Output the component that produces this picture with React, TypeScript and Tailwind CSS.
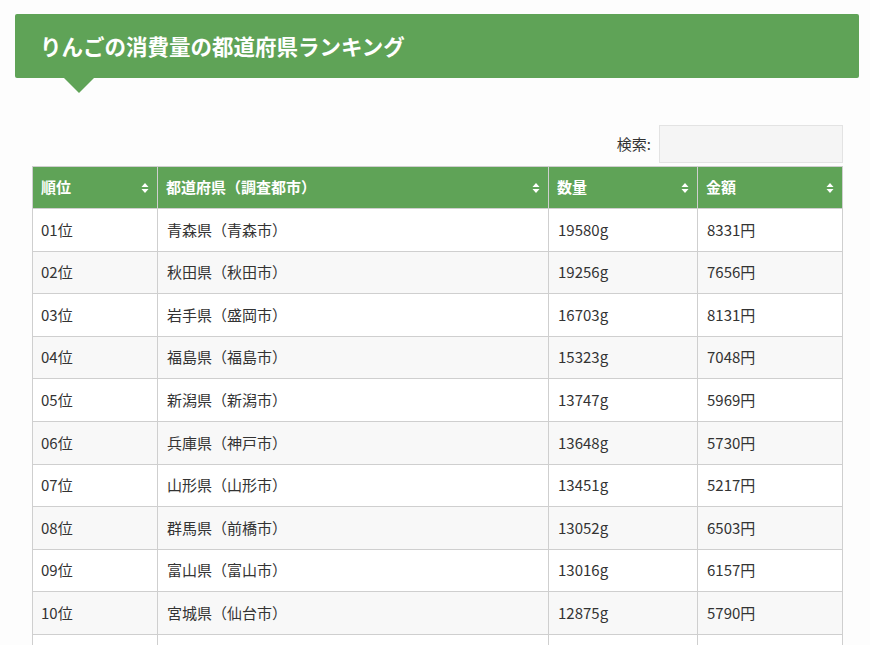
import React from "react";

const rows = [
  ["01位", "青森県（青森市）", "19580g", "8331円"],
  ["02位", "秋田県（秋田市）", "19256g", "7656円"],
  ["03位", "岩手県（盛岡市）", "16703g", "8131円"],
  ["04位", "福島県（福島市）", "15323g", "7048円"],
  ["05位", "新潟県（新潟市）", "13747g", "5969円"],
  ["06位", "兵庫県（神戸市）", "13648g", "5730円"],
  ["07位", "山形県（山形市）", "13451g", "5217円"],
  ["08位", "群馬県（前橋市）", "13052g", "6503円"],
  ["09位", "富山県（富山市）", "13016g", "6157円"],
  ["10位", "宮城県（仙台市）", "12875g", "5790円"],
  ["", "", "", ""],
];

const heads = ["順位", "都道府県（調査都市）", "数量", "金額"];
const widths = ["w-[125px]", "w-[391px]", "w-[149px]", "w-[145px]"];

const SortIcon = () => (
  <svg width="8" height="12" viewBox="0 0 8 12" className="shrink-0">
    <path d="M4 1 L7.5 5 H0.5 Z M4 11 L7.5 7 H0.5 Z" fill="white" />
  </svg>
);

export default function App() {
  return (
    <div
      className="w-[870px] h-[645px] overflow-hidden bg-[#fdfdfd] pt-[14px] text-[#333]"
      style={{ fontFamily: "'Noto Sans CJK JP', 'Noto Sans', sans-serif" }}
    >
      <div className="relative ml-[15px] w-[844px] h-[64px] bg-[#5fa357] rounded-[2px] flex items-center pl-[25px]">
        <h1 className="text-white text-[21.5px] font-bold">りんごの消費量の都道府県ランキング</h1>
        <div className="absolute left-[49px] top-[64px] w-0 h-0 border-l-[15px] border-r-[15px] border-t-[15px] border-l-transparent border-r-transparent border-t-[#5fa357]" />
      </div>
      <div className="ml-[32px] w-[811px] mt-[47px] flex justify-end items-center gap-[8px] text-[15px]">
        <span>検索:</span>
        <div className="w-[184px] h-[38px] bg-[#f5f5f5] border border-[#e3e3e3]" />
      </div>
      <table className="ml-[32px] mt-[3px] border-collapse text-[15px] table-fixed w-[811px]">
        <thead>
          <tr className="bg-[#5fa357] text-white h-[42px]">
            {heads.map((h, i) => (
              <th key={i} className={`${widths[i]} border border-[#cfcfcf] px-[8px] font-bold text-left`}>
                <div className="flex items-center justify-between">
                  <span>{h}</span>
                  <SortIcon />
                </div>
              </th>
            ))}
          </tr>
        </thead>
        <tbody>
          {rows.map((r, i) => (
            <tr key={i} className={`h-[42.6px] ${i % 2 ? "bg-[#f8f8f8]" : "bg-white"}`}>
              {r.map((c, j) => (
                <td key={j} className={`border border-[#cfcfcf] ${j === 0 ? "px-[8px]" : "px-[9px]"}`}>{c}</td>
              ))}
            </tr>
          ))}
        </tbody>
      </table>
    </div>
  );
}
